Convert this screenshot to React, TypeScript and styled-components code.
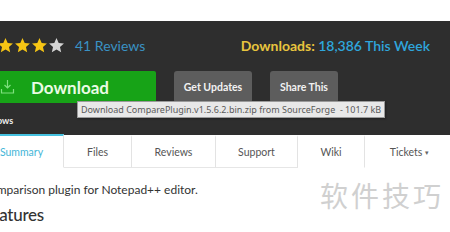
import React from "react";
import styled, { createGlobalStyle } from "styled-components";

const GlobalStyle = createGlobalStyle`
  html, body { margin: 0; padding: 0; background: #fff; }
  body { font-family: Lato, "Open Sans", sans-serif; }
`;

const Page = styled.div`
  position: relative;
  width: 450px;
  height: 232px;
  overflow: hidden;
  background: #fff;
`;

const TopGap = styled.div`
  height: 21px;
`;

const Panel = styled.div`
  height: 114px;
  background: #2e2e2e;
`;

const Shift = styled.div`
  position: relative;
  margin-left: -20px;
  width: 470px;
  height: 100%;
`;

const RatingRow = styled.div`
  display: flex;
  align-items: center;
  justify-content: space-between;
  height: 18px;
  padding: 15px 20px 0 17px;
`;

const Rating = styled.div`
  display: flex;
  align-items: center;
`;

const Stars = styled.div`
  display: flex;
  gap: 0;
  margin-right: 10px;
`;

const ReviewLink = styled.span`
  font-size: 14px;
  color: #3a92c4;
`;

const Stat = styled.div`
  font-size: 14px;
  font-weight: 700;
  color: #e8c53e;
`;

const StatValue = styled.span`
  color: #2fa6dc;
  font-weight: 600;
`;

const ButtonRow = styled.div`
  display: flex;
  gap: 18px;
  margin-top: 17px;
  height: 32px;
`;

const DownloadButton = styled.div`
  display: flex;
  align-items: center;
  gap: 16px;
  width: 176px;
  padding-left: 20px;
  box-sizing: border-box;
  background: #17a317;
  color: #eafbe4;
  font-size: 17px;
  font-weight: 700;
  border-radius: 2px;
`;

const GreyButton = styled.div<{ $w: number }>`
  display: flex;
  align-items: center;
  justify-content: center;
  width: ${(p) => p.$w}px;
  background: #5d5d5d;
  color: #f2f2f2;
  font-size: 10.5px;
  font-weight: 700;
  border-radius: 3px;
`;

const Platform = styled.div`
  margin-top: 12px;
  margin-left: -5px;
  font-size: 9px;
  line-height: 12px;
  font-weight: 700;
  color: #f0f0f0;
`;

const Tooltip = styled.div`
  position: absolute;
  top: 80px;
  left: 97px;
  height: 15px;
  padding: 0 3px;
  border: 1px solid #9a9a9a;
  background: #e8e8e8;
  color: #5a5a5a;
  font-family: "Noto Sans", "Open Sans", sans-serif;
  font-size: 9px;
  line-height: 15px;
  white-space: pre;
  box-shadow: 1px 1px 2px rgba(0, 0, 0, 0.3);
`;

const Tabs = styled.div`
  display: flex;
  height: 33px;
  margin-left: -20px;
`;

const Tab = styled.div<{ $w: number; $active?: boolean; $line?: boolean }>`
  display: flex;
  align-items: center;
  justify-content: center;
  gap: 3px;
  flex: none;
  width: ${(p) => p.$w}px;
  box-sizing: border-box;
  border-right: 1px solid #e3e3e3;
  border-top: 2px solid ${(p) => (p.$active ? "#45c1df" : "transparent")};
  border-bottom: 1px solid ${(p) => (p.$line ? "#e6e6e6" : "transparent")};
  margin-top: ${(p) => (p.$active ? "-1px" : "0")};
  color: ${(p) => (p.$active ? "#45b6d8" : "#555")};
  font-size: 10.5px;
`;

const Caret = styled.span`
  font-size: 7px;
  color: #666;
`;

const Content = styled.div`
  margin-left: -18px;
  color: #333;
`;

const Summary = styled.p`
  margin: 14px 0 0;
  font-size: 12px;
  line-height: 16px;
`;

const Heading = styled.h2`
  margin: 6px 0 0;
  font-size: 17px;
  line-height: 22px;
  font-weight: 500;
  letter-spacing: -0.3px;
`;

const Watermark = styled.div`
  position: absolute;
  left: 320px;
  top: 180px;
  font-family: "Noto Sans CJK SC", sans-serif;
  font-size: 28px;
  line-height: 30px;
  letter-spacing: 3px;
  color: #d0d0d0;
`;

const Star = ({ on }: { on: boolean }) => (
  <svg width="17" height="17" viewBox="0 0 24 24">
    <path
      d="M12 1.5l3.1 6.9 7.4.7-5.6 5 1.7 7.4L12 17.6l-6.6 3.9 1.7-7.4-5.6-5 7.4-.7z"
      fill={on ? "#f6c514" : "#d4d4d4"}
    />
  </svg>
);

const DownloadIcon = () => (
  <svg width="15" height="16" viewBox="0 0 15 16" fill="none" stroke="#7fe07f" strokeWidth="1.2">
    <path d="M7.5 1v8M4.5 6l3 3 3-3" />
    <path d="M1.5 10v4h12v-4" />
  </svg>
);

export default function App() {
  return (
    <Page>
      <GlobalStyle />
      <TopGap />
      <Panel>
        <Shift>
          <RatingRow>
            <Rating>
              <Stars>
                <Star on />
                <Star on />
                <Star on />
                <Star on={false} />
              </Stars>
              <ReviewLink>41 Reviews</ReviewLink>
            </Rating>
            <Stat>
              Downloads: <StatValue>18,386 This Week</StatValue>
            </Stat>
          </RatingRow>
          <ButtonRow>
            <DownloadButton>
              <DownloadIcon />
              Download
            </DownloadButton>
            <GreyButton $w={78}>Get Updates</GreyButton>
            <GreyButton $w={68}>Share This</GreyButton>
          </ButtonRow>
          <Platform>Windows</Platform>
          <Tooltip>Download ComparePlugin.v1.5.6.2.bin.zip from SourceForge  - 101.7 kB</Tooltip>
        </Shift>
      </Panel>
      <Tabs>
        <Tab $w={84} $active>Summary</Tab>
        <Tab $w={68} $line>Files</Tab>
        <Tab $w={84} $line>Reviews</Tab>
        <Tab $w={82} $line>Support</Tab>
        <Tab $w={67}>Wiki</Tab>
        <Tab $w={90}>
          Tickets <Caret>▾</Caret>
        </Tab>
      </Tabs>
      <Content>
        <Summary>Comparison plugin for Notepad++ editor.</Summary>
        <Heading>Features</Heading>
      </Content>
      <Watermark>软件技巧</Watermark>
    </Page>
  );
}
